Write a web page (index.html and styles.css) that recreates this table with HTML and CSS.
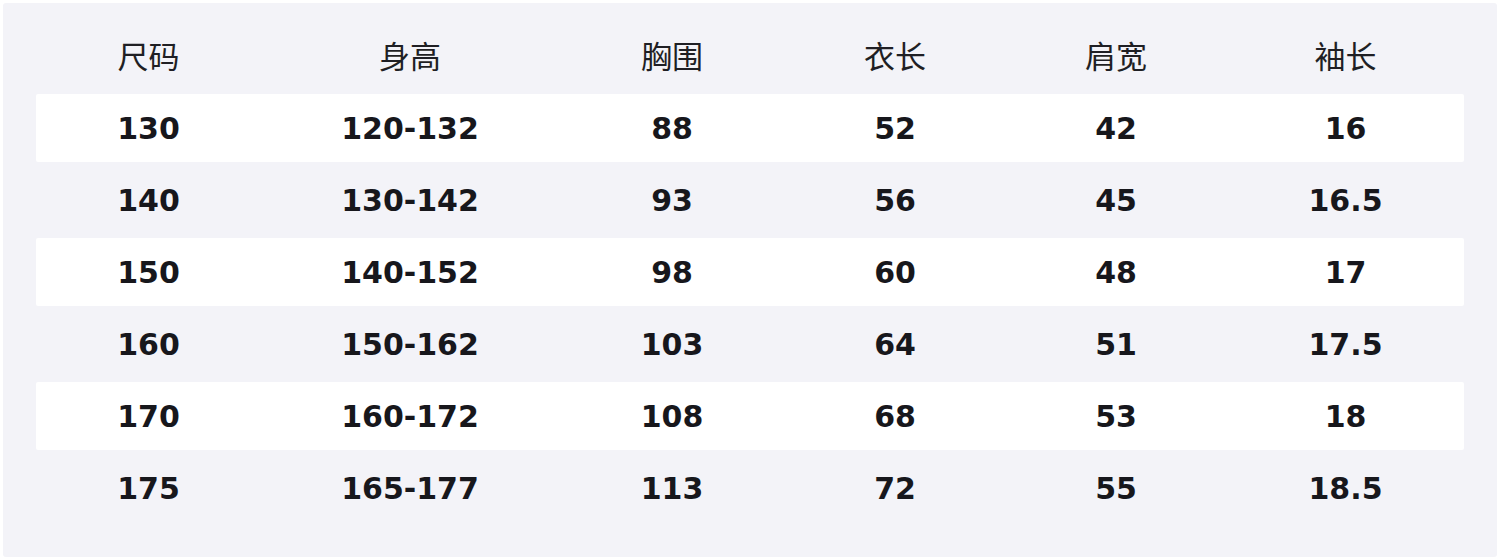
FILE: index.html
```html
<!DOCTYPE html>
<html lang="zh">
<head>
<meta charset="utf-8">
<link rel="stylesheet" href="styles.css">
</head>
<body>
<div class="panel">
  <div class="table">
    <div class="row head">
      <div>尺码</div><div>身高</div><div>胸围</div><div>衣长</div><div>肩宽</div><div>袖长</div>
    </div>
    <div class="row odd">
      <div>130</div><div>120-132</div><div>88</div><div>52</div><div>42</div><div>16</div>
    </div>
    <div class="row">
      <div>140</div><div>130-142</div><div>93</div><div>56</div><div>45</div><div>16.5</div>
    </div>
    <div class="row odd">
      <div>150</div><div>140-152</div><div>98</div><div>60</div><div>48</div><div>17</div>
    </div>
    <div class="row">
      <div>160</div><div>150-162</div><div>103</div><div>64</div><div>51</div><div>17.5</div>
    </div>
    <div class="row odd">
      <div>170</div><div>160-172</div><div>108</div><div>68</div><div>53</div><div>18</div>
    </div>
    <div class="row">
      <div>175</div><div>165-177</div><div>113</div><div>72</div><div>55</div><div>18.5</div>
    </div>
  </div>
</div>
</body>
</html>
```

FILE: styles.css
```css
html, body {
  margin: 0;
  padding: 0;
  background: #ffffff;
}
.panel {
  box-sizing: border-box;
  margin: 3px;
  width: 1494px;
  height: 554px;
  background: #f3f3f8;
  border-radius: 3px;
  padding: 19px 33px 0 33px;
}
.table {
  display: flex;
  flex-direction: column;
  gap: 4px;
  width: 1428px;
}
.row {
  display: grid;
  grid-template-columns: 225px 298px 226px 220px 222px 237px;
  height: 68px;
  align-items: center;
  justify-items: center;
  font-family: "DejaVu Sans", "Noto Sans CJK SC", sans-serif;
  font-weight: bold;
  font-size: 30px;
  color: #17171c;
  border-radius: 2px;
}
.row.odd {
  background: #ffffff;
}
.row.head {
  font-family: "Noto Sans CJK SC", sans-serif;
  font-weight: normal;
  font-size: 31px;
  color: #1f1f24;
  padding-bottom: 4px;
  box-sizing: border-box;
}
```
